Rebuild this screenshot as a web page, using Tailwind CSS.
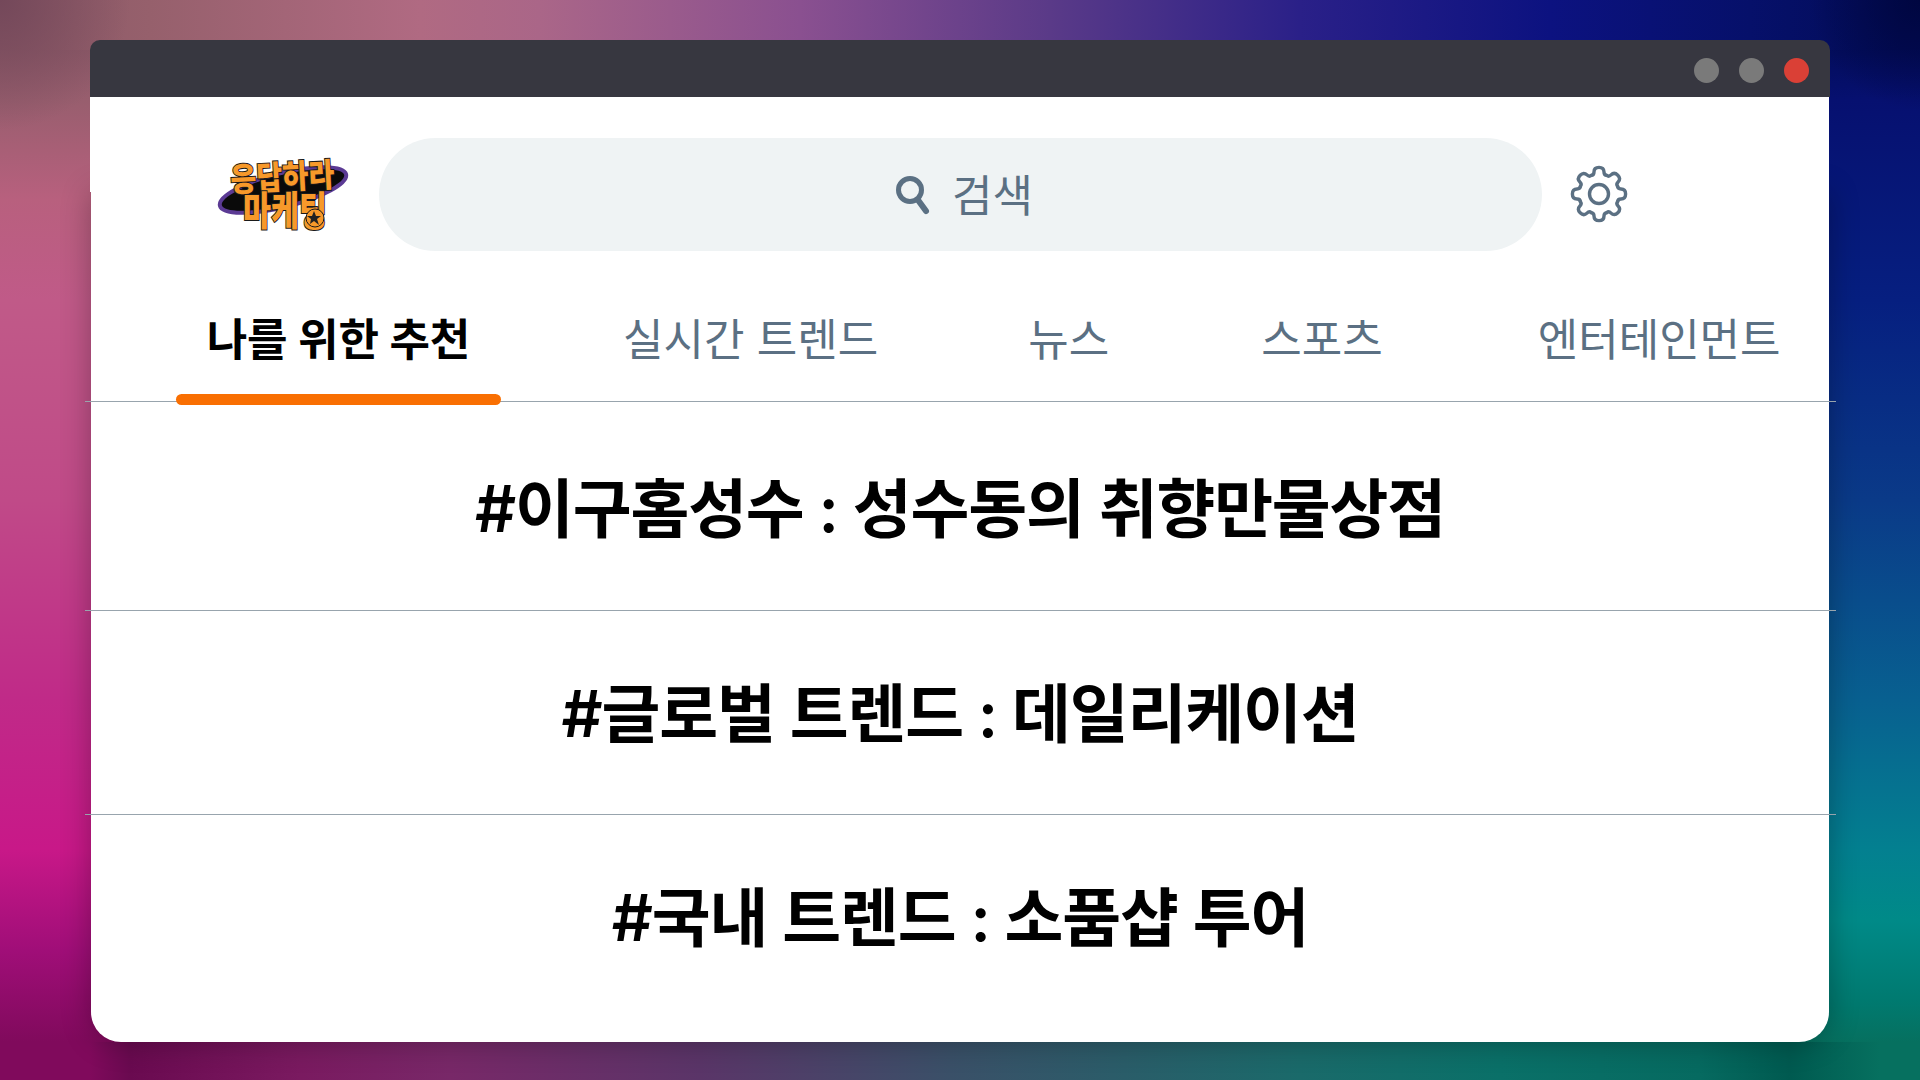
<!DOCTYPE html>
<html lang="ko"><head><meta charset="utf-8"><script src="https://cdn.jsdelivr.net/npm/@tailwindcss/browser@4"></script></head>
<body class="m-0">
<div class="w-[1920px] h-[1080px] overflow-hidden font-['Inter','Noto_Sans_CJK_KR','Noto_Sans',sans-serif] pt-[40px] pl-[90px] bg-no-repeat bg-[#5a2a70] bg-[image:radial-gradient(circle_at_0_0,#74485a_0px,transparent_130px),radial-gradient(circle_at_1920px_0,#000640_0px,transparent_110px),linear-gradient(90deg,#8a5866_0px,#96606c_150px,#b06a82_420px,#aa6688_540px,#8a5090_800px,#5a3a88_1050px,#2a2088_1300px,#0c1280_1550px,#06106a_1750px,#020c58_1900px),linear-gradient(90deg,#800a5c_0px,#800a5c_90px,#6a0a50_130px,#7a1a60_300px,#782868_450px,#5a3568_700px,#3a5068_950px,#1a6a6a_1300px,#0a7068_1500px,#066a60_1700px,#005a50_1790px,#06705f_1880px),linear-gradient(180deg,#8a5866_40px,#985e6e_100px,#b8607e_200px,#c05a88_300px,#c04a88_500px,#c02a88_700px,#c81888_850px,#a00e78_950px,#800a5c_1042px,#600a4c_1080px),linear-gradient(180deg,#020c58_40px,#061070_100px,#061f80_300px,#0a3a88_500px,#086090_700px,#038090_850px,#008a88_920px,#007a70_1000px,#06705f_1042px,#046058_1080px)] bg-[length:1920px_1080px,1920px_1080px,1920px_50px,1920px_38px,121px_1080px,121px_1080px] bg-[position:0_0,0_0,0_0,0_1042px,0_0,1799px_0]">
  <div class="w-[1740px] h-[1002px] flex flex-col">
    <div class="relative z-10 h-[57px] bg-[#373740] rounded-t-[10px] flex items-center justify-end gap-[20px] pr-[21px] pt-[3px] shrink-0">
      <span class="w-[25px] h-[25px] rounded-full bg-[#7a7a7a]"></span>
      <span class="w-[25px] h-[25px] rounded-full bg-[#7a7a7a]"></span>
      <span class="w-[25px] h-[25px] rounded-full bg-[#da4036]"></span>
    </div>
    <div class="flex-1 flex flex-col mx-px">
      <div class="relative z-10 bg-white -ml-px h-[95px] shrink-0"></div>
      <div class="flex-1 relative bg-white rounded-b-[30px] flex flex-col shadow-[0_0_30px_rgba(0,0,0,0.3)]">
        <div class="h-[59px] shrink-0 relative z-20">
          <div class="absolute left-0 top-[-54px] flex items-start">
            <svg class="ml-[125px] mt-[18px] shrink-0 overflow-visible" width="134" height="76" viewBox="0 0 134 76">
              <ellipse cx="67" cy="34" rx="65" ry="17" transform="rotate(-14 67 34)" fill="#0a0a0a" stroke="#5b3a94" stroke-width="4"/>
              <text x="67" y="33" text-anchor="middle" font-size="33" font-weight="900" fill="#f7992a" stroke="#1a1a1a" stroke-width="2" paint-order="stroke" textLength="104" lengthAdjust="spacingAndGlyphs" transform="rotate(-3 67 33)" font-family="'Noto Sans CJK KR'">응답하라</text>
              <text x="69" y="69" text-anchor="middle" font-size="40" font-weight="900" fill="#f7992a" stroke="#1a1a1a" stroke-width="2" paint-order="stroke" textLength="84" lengthAdjust="spacingAndGlyphs" font-family="'Noto Sans CJK KR'">마케팅</text>
              <circle cx="99" cy="62" r="9" fill="#f7992a" stroke="#1a1a1a"/>
              <path d="M98 55 L100 60 L105 60 L101 63 L103 69 L98 65 L94 68 L95 63 L91 60 L96 60 Z" fill="#222"/>
            </svg>
            <div class="ml-[29px] w-[1163px] h-[113px] rounded-full bg-[#eff3f4] flex items-center justify-center gap-[21px] shrink-0 pl-[7px]">
              <svg width="36" height="40" viewBox="0 0 36 40" fill="none" stroke="#5b7083" class="shrink-0">
                <circle cx="15" cy="15" r="11.5" stroke-width="5"/>
                <path d="M23 25 L31 36" stroke-width="6" stroke-linecap="round"/>
              </svg>
              <span class="text-[44px] leading-none text-[#5b7083] pt-[2px]">검색</span>
            </div>
            <svg class="ml-[28px] mt-[27px] shrink-0" width="58" height="58" viewBox="-29 -29 58 58" fill="none" stroke="#5b7083" stroke-width="3.4" stroke-linecap="round" stroke-linejoin="round">
              <circle r="9.5"/>
              <path d="M-7.8 -18.6 Q-5 -18.8 -5 -22 Q-5 -26.6 0 -26.6 Q5 -26.6 5 -22 Q5 -18.8 7.8 -18.6"/>
              <path transform="rotate(45)" d="M-7.8 -18.6 Q-5 -18.8 -5 -22 Q-5 -26.6 0 -26.6 Q5 -26.6 5 -22 Q5 -18.8 7.8 -18.6"/>
              <path transform="rotate(90)" d="M-7.8 -18.6 Q-5 -18.8 -5 -22 Q-5 -26.6 0 -26.6 Q5 -26.6 5 -22 Q5 -18.8 7.8 -18.6"/>
              <path transform="rotate(135)" d="M-7.8 -18.6 Q-5 -18.8 -5 -22 Q-5 -26.6 0 -26.6 Q5 -26.6 5 -22 Q5 -18.8 7.8 -18.6"/>
              <path transform="rotate(180)" d="M-7.8 -18.6 Q-5 -18.8 -5 -22 Q-5 -26.6 0 -26.6 Q5 -26.6 5 -22 Q5 -18.8 7.8 -18.6"/>
              <path transform="rotate(225)" d="M-7.8 -18.6 Q-5 -18.8 -5 -22 Q-5 -26.6 0 -26.6 Q5 -26.6 5 -22 Q5 -18.8 7.8 -18.6"/>
              <path transform="rotate(270)" d="M-7.8 -18.6 Q-5 -18.8 -5 -22 Q-5 -26.6 0 -26.6 Q5 -26.6 5 -22 Q5 -18.8 7.8 -18.6"/>
              <path transform="rotate(315)" d="M-7.8 -18.6 Q-5 -18.8 -5 -22 Q-5 -26.6 0 -26.6 Q5 -26.6 5 -22 Q5 -18.8 7.8 -18.6"/>
            </svg>
          </div>
        </div>
        <div class="h-[150px] flex pl-[85px] gap-[90px] shrink-0 text-[44px] leading-none text-[#5b7083]">
          <div class="relative z-10 w-[325px] pt-[67px] text-center font-bold text-black whitespace-nowrap">나를 위한 추천
            <span class="absolute left-0 right-0 bottom-[-4px] h-[11px] rounded-full bg-[#f96f02]"></span>
          </div>
          <div class="pt-[67px] whitespace-nowrap ml-[32px]">실시간 트렌드</div>
          <div class="pt-[67px] whitespace-nowrap ml-[60px]">뉴스</div>
          <div class="pt-[67px] whitespace-nowrap ml-[62px]">스포츠</div>
          <div class="pt-[67px] whitespace-nowrap ml-[65px]">엔터테인먼트</div>
        </div>
        <div class="h-px bg-[#98a4ad] -ml-[6px] -mr-[7px] shrink-0"></div>
        <div class="h-[208px] shrink-0 flex items-center justify-center text-[64px] font-semibold tracking-[-0.018em] text-black leading-none pt-[6px]">#이구홈성수 : 성수동의 취향만물상점</div>
        <div class="h-px bg-[#98a4ad] -ml-[6px] -mr-[7px] shrink-0"></div>
        <div class="h-[203px] shrink-0 flex items-center justify-center text-[64px] font-semibold tracking-[-0.018em] text-black leading-none pt-[2px]">#글로벌 트렌드 : 데일리케이션</div>
        <div class="h-px bg-[#98a4ad] -ml-[6px] -mr-[7px] shrink-0"></div>
        <div class="h-[203px] shrink-0 flex items-center justify-center text-[64px] font-semibold tracking-[-0.018em] text-black leading-none pt-[2px]">#국내 트렌드 : 소품샵 투어</div>
      </div>
    </div>
  </div>
</div>
</body></html>
